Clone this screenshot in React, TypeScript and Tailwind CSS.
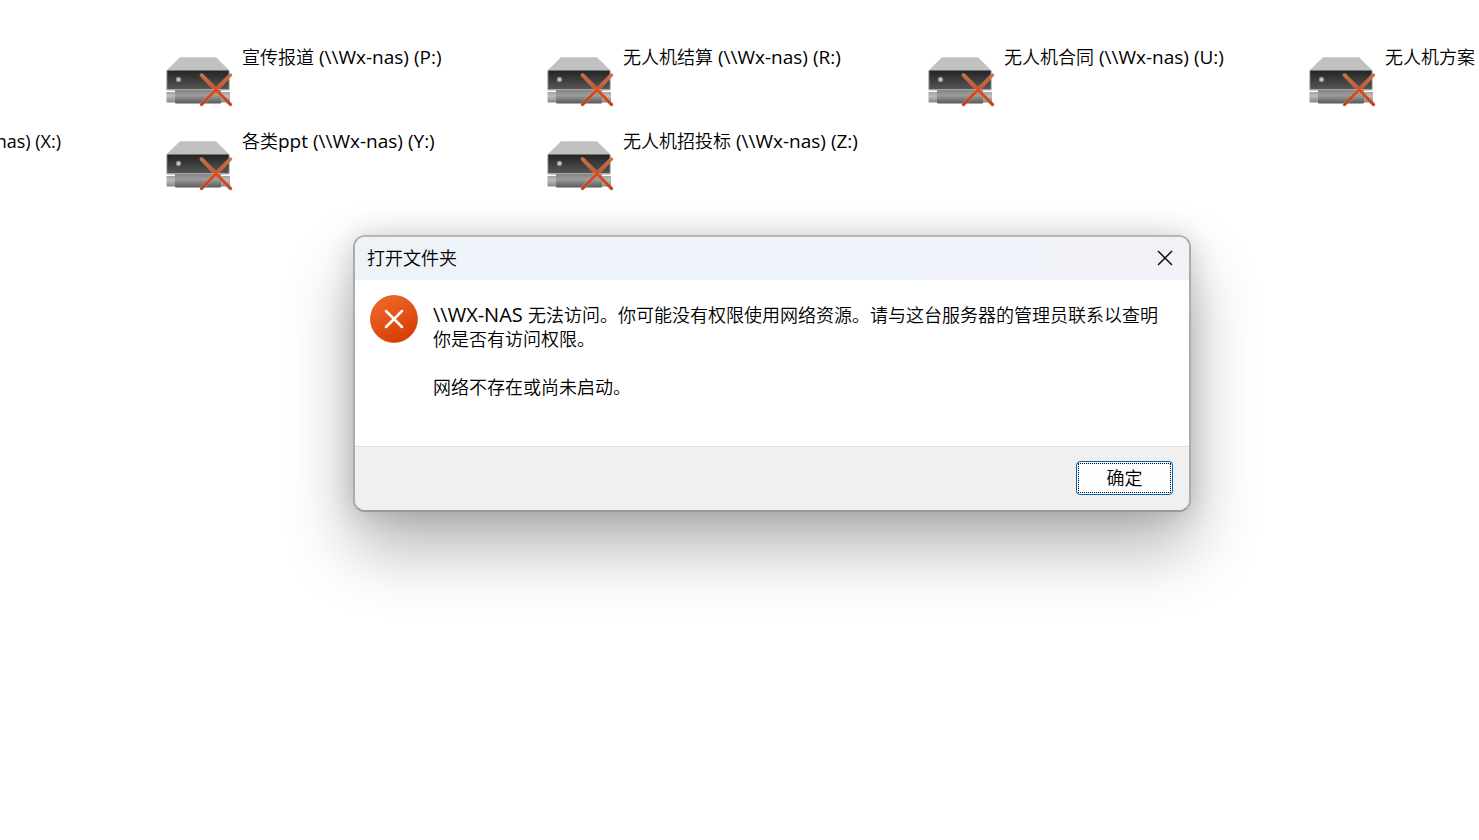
import { useId } from "react";

const drives = [
  { name: "宣传报道", path: " (\\\\Wx-nas) (P:)", cell: "col-start-2 row-start-1" },
  { name: "无人机结算", path: " (\\\\Wx-nas) (R:)", cell: "col-start-3 row-start-1" },
  { name: "无人机合同", path: " (\\\\Wx-nas) (U:)", cell: "col-start-4 row-start-1" },
  { name: "无人机方案", path: "", cell: "col-start-5 row-start-1" },
  { name: "各类", path: "ppt (\\\\Wx-nas) (Y:)", cell: "col-start-2 row-start-2" },
  { name: "无人机招投标", path: " (\\\\Wx-nas) (Z:)", cell: "col-start-3 row-start-2" },
];

function DriveIcon() {
  const id = useId();
  return (
    <svg width="68" height="52" viewBox="0 0 68 52" className="shrink-0">
      <defs>
        <linearGradient id={`${id}front`} x1="0" y1="0" x2="0" y2="1">
          <stop offset="0" stopColor="#242424" />
          <stop offset="1" stopColor="#555" />
        </linearGradient>
        <linearGradient id={`${id}pipe`} x1="0" y1="0" x2="0" y2="1">
          <stop offset="0" stopColor="#858585" />
          <stop offset="0.4" stopColor="#9c9c9c" />
          <stop offset="1" stopColor="#585858" />
        </linearGradient>
        <linearGradient id={`${id}end`} x1="0" y1="0" x2="0" y2="1">
          <stop offset="0" stopColor="#a2a2a2" />
          <stop offset="0.4" stopColor="#bcbcbc" />
          <stop offset="1" stopColor="#858585" />
        </linearGradient>
        <linearGradient id={`${id}cross`} x1="0" y1="0" x2="0" y2="1">
          <stop offset="0" stopColor="#cd6d45" />
          <stop offset="0.5" stopColor="#dc4f1c" />
          <stop offset="1" stopColor="#b8431b" />
        </linearGradient>
      </defs>
      <path d="M14 0.300h36L63.500 13.500H0.500z" fill="#c1c1c1" />
      <path d="M0.300 13.500h63.400v18.500q0 1.500-1.500 1.500H1.800q-1.500 0-1.500-1.500z" fill="#a5a5a5" />
      <path d="M1.300 13.500h61.400v18.500H1.300z" fill={`url(#${id}front)`} />
      <circle cx="12.500" cy="22.500" r="2.700" fill="#8c8c8c" />
      <circle cx="12.500" cy="22.500" r="1.500" fill="#d0d0d0" />
      <path d="M0.500 35h9v10.500h-8q-1 0-1-1zM55 35h9v9.500q0 1-1 1h-8z" fill={`url(#${id}end)`} />
      <path d="M9 33h46v12.500q0 1-1 1H10q-1 0-1-1z" fill={`url(#${id}pipe)`} />
      <path
        d="M35.500 18l29 29.500M64.500 18l-29 29.500"
        stroke="#e0a58c"
        strokeOpacity="0.5"
        strokeWidth="4"
        strokeLinecap="round"
      />
      <path
        d="M35.500 18l29 29.500M64.500 18l-29 29.500"
        stroke={`url(#${id}cross)`}
        strokeWidth="3"
        strokeLinecap="round"
      />
    </svg>
  );
}

function ErrorIcon() {
  return (
    <svg width="48" height="48" viewBox="0 0 48 48" className="shrink-0">
      <defs>
        <linearGradient id="error-fill" x1="0.2" y1="0" x2="0.7" y2="1">
          <stop offset="0" stopColor="#ee6a2c" />
          <stop offset="1" stopColor="#d83b01" />
        </linearGradient>
      </defs>
      <circle cx="24" cy="24" r="23.500" fill="url(#error-fill)" stroke="#c94a17" strokeOpacity="0.7" />
      <path d="M16 16l16 16M32 16L16 32" stroke="#fff" strokeWidth="2.500" strokeLinecap="round" />
    </svg>
  );
}

function ErrorDialog() {
  return (
    <div
      role="dialog"
      aria-labelledby="dialog-title"
      className="absolute left-[353px] top-[235px] w-[838px] overflow-hidden rounded-xl border-2 border-x-[#acacac] border-t-[#b6b6b6] border-b-[#9b9b9b] bg-white shadow-[0_36px_68px_rgba(0,0,0,0.3),0_0_28px_rgba(0,0,0,0.16)]"
    >
      <div className="flex h-[43px] items-center justify-between bg-linear-to-r from-[#eef3f8] via-[#eef3fb] to-[#f1f2f7] pb-[2px] pl-3 pr-[15px]">
        <h1 id="dialog-title" className="font-[350]">打开文件夹</h1>
        <button type="button" aria-label="关闭" className="p-px">
          <svg width="16" height="16" viewBox="0 0 16 16">
            <path d="M1 1l14 14M15 1L1 15" stroke="#111" strokeWidth="1.500" />
          </svg>
        </button>
      </div>
      <div className="flex gap-[15px] px-[15px] pb-[47px] pt-[15px]">
        <ErrorIcon />
        <div className="flex flex-col gap-6 pt-2">
          <p>
            <span className="text-[20px] font-normal leading-none">{"\\\\WX-NAS "}</span>
            无法访问。你可能没有权限使用网络资源。请与这台服务器的管理员联系以查明
            <br />
            你是否有访问权限。
          </p>
          <p>网络不存在或尚未启动。</p>
        </div>
      </div>
      <div className="flex justify-end border-t border-[#dfdfdf] bg-[#f0f0f0] px-4 pb-[15px] pt-[14px]">
        <button
          type="button"
          className="h-[34px] w-[97px] rounded border border-[#0067b8] bg-[#fdfdfd] p-px"
        >
          <span className="flex h-full items-center justify-center border border-dotted border-black">
            确定
          </span>
        </button>
      </div>
    </div>
  );
}

export default function App() {
  return (
    <div className="relative min-h-screen overflow-hidden bg-white font-['Open_Sans','Noto_Sans_CJK_SC',sans-serif] text-[18px] font-[350] leading-6 text-black">
      <ul className="grid auto-rows-[84px] grid-cols-[166px_381px_381px_381px_1fr] pt-[45px]">
        <li className="col-start-1 row-start-2 flex w-[61px] justify-end overflow-hidden whitespace-nowrap font-normal">
          nas) (X:)
        </li>
        {drives.map((drive) => (
          <li key={drive.name} className={`flex gap-2 whitespace-nowrap ${drive.cell}`}>
            <div className="pt-3">
              <DriveIcon />
            </div>
            <span>
              {drive.name}
              <span className="text-[19px] font-normal leading-none">{drive.path}</span>
            </span>
          </li>
        ))}
      </ul>
      <ErrorDialog />
    </div>
  );
}
